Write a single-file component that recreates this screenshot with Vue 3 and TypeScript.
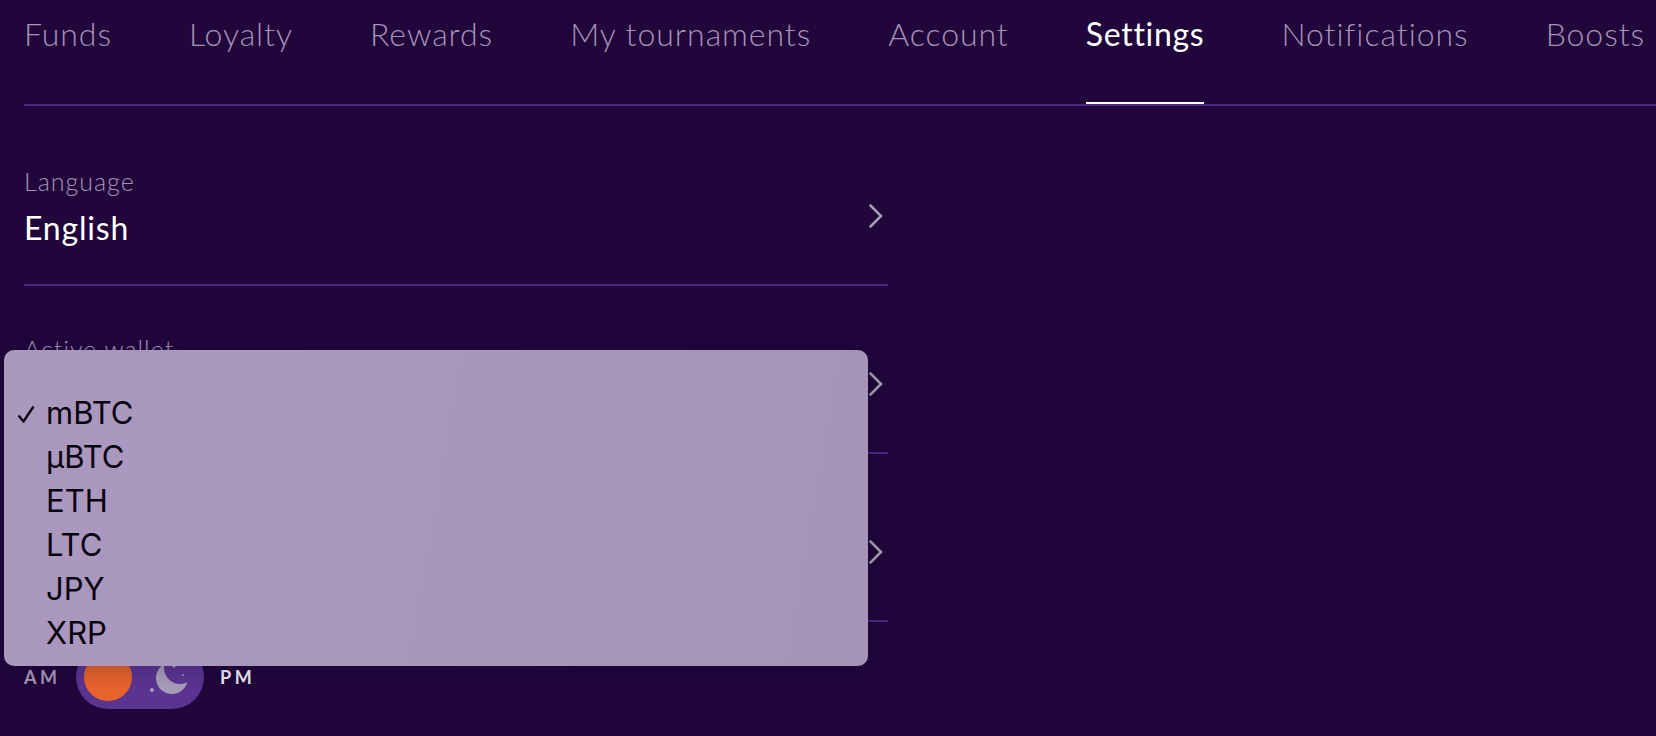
<script setup lang="ts">
const tabs: string[] = ['Funds', 'Loyalty', 'Rewards', 'My tournaments', 'Account', 'Settings', 'Notifications', 'Boosts']
const options: string[] = ['mBTC', 'µBTC', 'ETH', 'LTC', 'JPY', 'XRP']
</script>

<template>
  <div class="page">
    <nav class="tabs">
      <a v-for="t in tabs" :key="t" class="tab" :class="{ active: t === 'Settings' }">{{ t }}</a>
    </nav>

    <section class="rows">
      <div class="row">
        <div class="row-text">
          <div class="label">Language</div>
          <div class="value">English</div>
        </div>
        <svg class="chev" width="16" height="26" viewBox="0 0 16 26"><path d="M2.5 2.5L13 13L2.5 23.5" fill="none" stroke="#a39cae" stroke-width="2.6" stroke-linecap="round" /></svg>
      </div>
      <div class="row">
        <div class="row-text">
          <div class="label">Active wallet</div>
        </div>
        <svg class="chev" width="16" height="26" viewBox="0 0 16 26"><path d="M2.5 2.5L13 13L2.5 23.5" fill="none" stroke="#a39cae" stroke-width="2.6" stroke-linecap="round" /></svg>
      </div>
      <div class="row">
        <div class="row-text"></div>
        <svg class="chev" width="16" height="26" viewBox="0 0 16 26"><path d="M2.5 2.5L13 13L2.5 23.5" fill="none" stroke="#a39cae" stroke-width="2.6" stroke-linecap="round" /></svg>
      </div>
    </section>

    <div class="theme">
      <span class="mode am">AM</span>
      <div class="switch">
        <span class="sun"></span>
        <svg class="night" width="48" height="48" viewBox="0 0 48 48">
          <path d="M16.6 10.8A16 16 0 1 0 39.4 29.2A16 16 0 0 1 16.6 10.8Z" fill="#a59bb6" />
          <circle cx="4" cy="37" r="2" fill="#a59bb6" />
          <circle cx="35" cy="22" r="1" fill="#a59bb6" />
          <circle cx="26" cy="13" r="1.6" fill="#a59bb6" />
        </svg>
      </div>
      <span class="mode pm">PM</span>
    </div>

    <ul class="menu">
      <li v-for="(o, i) in options" :key="o" class="option">
        <svg v-if="i === 0" class="tick" width="18" height="18" viewBox="0 0 18 18"><path d="M1.5 10.5l5 6L16.5 1.5" fill="none" stroke="#08020f" stroke-width="2.3" /></svg>
        {{ o }}
      </li>
    </ul>
  </div>
</template>

<style>
html, body { margin: 0; background: #20063b; }
</style>

<style scoped>
.page {
  position: relative;
  width: 1656px;
  height: 736px;
  overflow: hidden;
  background: #20063b;
  font-family: Lato, "Noto Sans", sans-serif;
  box-sizing: border-box;
  padding-left: 24px;
}
.tabs {
  display: flex;
  gap: 77px;
  height: 104px;
  border-bottom: 2px solid #4a2884;
  box-sizing: content-box;
  margin-right: -60px;
}
.tab {
  height: 104px;
  padding-top: 14px;
  box-sizing: border-box;
  font-size: 32px;
  line-height: 40px;
  font-weight: 300;
  letter-spacing: 0.95px;
  color: #a892b8;
  white-space: nowrap;
}
.tab.active {
  color: #fff;
  font-weight: 400;
  letter-spacing: 0.7px;
  border-bottom: 2px solid #fff;
}
.rows {
  width: 864px;
  padding-top: 12px;
}
.row {
  height: 168px;
  box-sizing: border-box;
  border-bottom: 2px solid #4a2884;
  display: flex;
  justify-content: space-between;
  align-items: flex-start;
}
.row-text { padding-top: 49px; }
.label {
  font-size: 25px;
  line-height: 28px;
  font-weight: 300;
  letter-spacing: 1px;
  color: #a892b8;
}
.value {
  margin-top: 13px;
  font-size: 32px;
  line-height: 40px;
  font-weight: 400;
  letter-spacing: 0.8px;
  color: #fff;
}
.chev { margin-top: 85px; margin-right: 4px; }
.theme {
  display: flex;
  align-items: center;
  margin-top: 23px;
}
.mode {
  font-size: 18px;
  font-weight: 700;
  letter-spacing: 3.5px;
  line-height: 64px;
}
.am { color: #a594b6; width: 52px; }
.pm { color: #ece6f2; margin-left: 16px; }
.switch {
  position: relative;
  width: 128px;
  height: 64px;
  border-radius: 32px;
  background: #5a3490;
}
.sun {
  position: absolute;
  left: 8px;
  top: 8px;
  width: 48px;
  height: 48px;
  border-radius: 50%;
  background: linear-gradient(#e05e2c, #e8642c);
}
.night { position: absolute; left: 72px; top: 8px; }
.menu {
  position: absolute;
  left: 4px;
  top: 350px;
  width: 864px;
  height: 316px;
  box-sizing: border-box;
  margin: 0;
  padding: 41px 0 0 42px;
  list-style: none;
  border-radius: 10px;
  background: linear-gradient(100deg, #ab98bf, #a694b8);
  box-shadow: 0 4px 20px rgba(10, 0, 25, 0.2);
  font-family: Inter, "Liberation Sans", sans-serif;
  font-size: 31px;
  line-height: 44px;
  color: #08020f;
}
.option { position: relative; height: 44px; }
.tick { position: absolute; left: -29px; top: 14px; }
</style>
